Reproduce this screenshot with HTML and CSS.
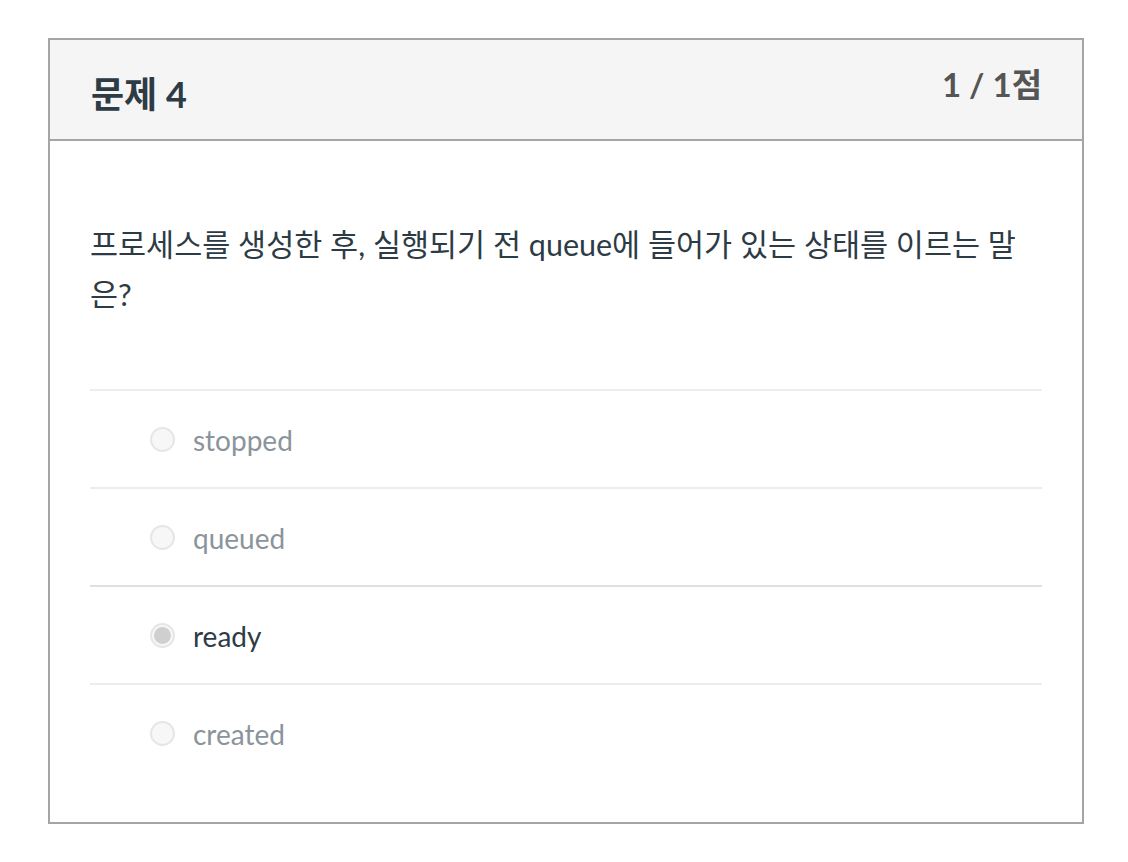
FILE: index.html
```html
<!DOCTYPE html>
<html lang="ko">
<head>
<meta charset="utf-8">
<link rel="stylesheet" href="styles.css">
</head>
<body>
<div class="card">
  <div class="card-header">
    <h2 class="title">문제 4</h2>
    <div class="points">1 / 1점</div>
  </div>
  <div class="card-body">
    <p class="question">프로세스를 생성한 후, 실행되기 전 queue에 들어가 있는 상태를 이르는 말은?</p>
    <ul class="answers">
      <li class="answer"><span class="radio"></span><span class="label">stopped</span></li>
      <li class="answer"><span class="radio"></span><span class="label">queued</span></li>
      <li class="answer selected"><span class="radio checked"></span><span class="label">ready</span></li>
      <li class="answer"><span class="radio"></span><span class="label">created</span></li>
    </ul>
  </div>
</div>
</body>
</html>
```
FILE: styles.css
```css
* { box-sizing: border-box; }
html, body { margin: 0; padding: 0; background: #fff; }
body {
  font-family: Lato, "Noto Sans CJK KR", sans-serif;
  color: #2d3b45;
  padding: 38px 0 0 48px;
}
.card {
  width: 1036px;
  height: 786px;
  border: 2px solid #a5a5a5;
}
.card-header {
  background: #f5f5f5;
  border-bottom: 2px solid #a5a5a5;
  height: 101px;
  padding: 0 40px;
  display: flex;
  justify-content: space-between;
  align-items: flex-start;
}
.title {
  margin: 34px 0 0 1px;
  font-size: 36px;
  font-weight: 700;
  line-height: 40px;
  color: #2d3b45;
}
.points {
  margin-top: 26px;
  font-size: 33px;
  font-weight: 700;
  line-height: 36px;
  color: #555;
}
.card-body {
  padding: 0 40px;
}
.question {
  margin: 78px 0 0 0;
  font-size: 30.5px;
  line-height: 50px;
}
.answers {
  list-style: none;
  margin: 70px 0 0 0;
  padding: 0;
}
.answer {
  border-top: 2px solid #ededed;
  height: 98px;
  display: flex;
  align-items: center;
  padding-left: 60px;
  padding-top: 2px;
}
.answer.selected { border-top-color: #e0e0e0; }
.radio {
  width: 25px;
  height: 25px;
  border-radius: 50%;
  border: 2px solid #e6e6e6;
  background: #f7f7f7;
  margin-right: 18px;
  margin-top: -1px;
  flex: none;
  display: flex;
  align-items: center;
  justify-content: center;
}
.radio.checked::after {
  content: "";
  width: 17px;
  height: 17px;
  border-radius: 50%;
  background: #cfcfcf;
}
.label {
  font-size: 28px;
  color: #8b949b;
}
.selected .label { color: #2d3b45; }
```
